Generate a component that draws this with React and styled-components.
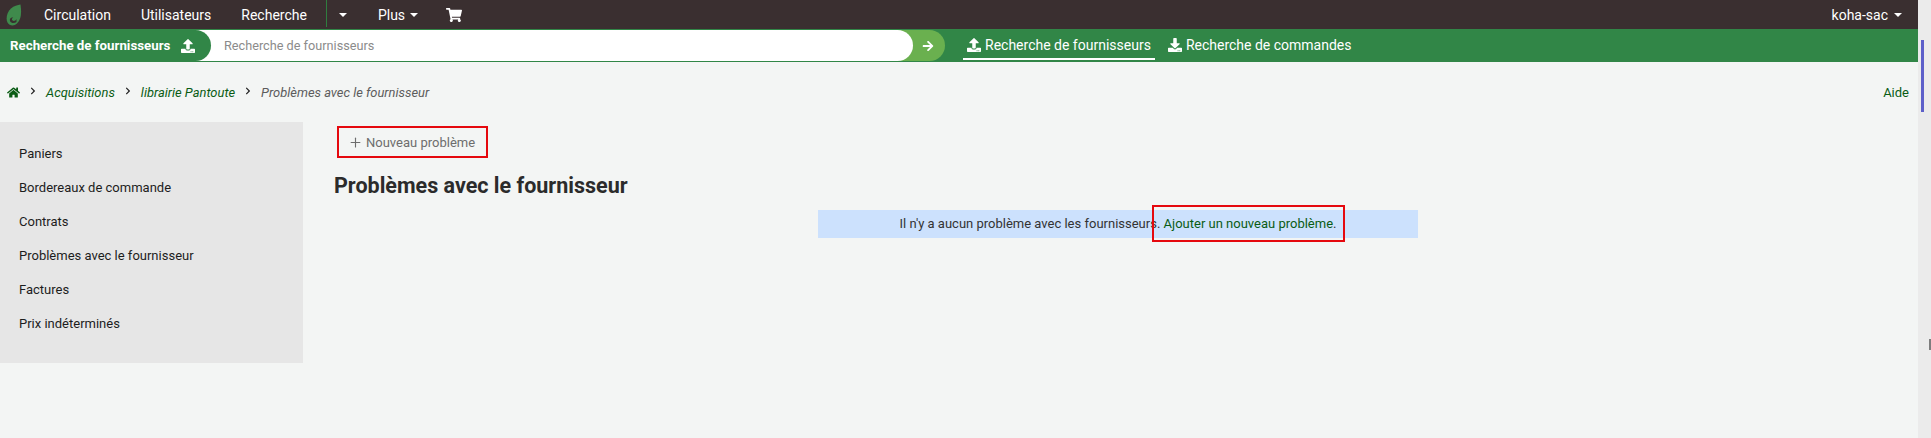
import styled, { createGlobalStyle } from "styled-components";
import { FaShoppingCart, FaHome, FaArrowRight, FaUpload, FaDownload, FaChevronRight } from "react-icons/fa";
import { Plus } from "lucide-react";

const GlobalStyle = createGlobalStyle`
  html, body {
    margin: 0;
    padding: 0;
    overflow: hidden;
  }
  body {
    font-family: Roboto, "Liberation Sans", sans-serif;
    font-size: 13px;
    color: #2b2b2b;
    background: #f3f5f4;
  }
  a {
    text-decoration: none;
  }
`;

const App = () => {
  return (
    <>
      <GlobalStyle />
      <Window>
        <Page>
          <Nav>
            <Logo viewBox="0 0 16 22">
              <path d="M14.5 0.5C15.6 8 15.6 15 11 19.5C8 22.3 3.5 22 1.5 18.5C-0.5 14.5 1 8 5 4.5C8 2 11.5 0.8 14.5 0.5Z" fill="#3f8a4c" />
              <path d="M10.5 18C8.5 19.6 5 19.4 4 17C3.2 14.6 5.4 12.8 7.2 13.8C5.8 14.2 5.4 15.8 6.6 16.6C8 17.4 9.8 16.6 10.5 15Z" fill="#39302f" />
            </Logo>
            <NavItem>Circulation</NavItem>
            <NavItem>Utilisateurs</NavItem>
            <NavItem>Recherche</NavItem>
            <NavDivider />
            <NavCaretOnly><Caret /></NavCaretOnly>
            <NavItem>Plus <Caret /></NavItem>
            <CartLink><FaShoppingCart size={16} /></CartLink>
            <UserMenu>koha-sac <Caret /></UserMenu>
          </Nav>
          <SearchBand>
            <SearchLabel>
              Recherche de fournisseurs
              <FaUpload size={14} />
            </SearchLabel>
            <SearchField>
              <SearchInput placeholder="Recherche de fournisseurs" readOnly />
            </SearchField>
            <SearchGo><FaArrowRight size={12} /></SearchGo>
            <BandLink $active><FaUpload size={14} />Recherche de fournisseurs</BandLink>
            <BandLink><FaDownload size={14} />Recherche de commandes</BandLink>
          </SearchBand>
          <Crumbs>
            <CrumbLink><FaHome size={13} color="#0a5c14" /></CrumbLink>
            <Sep><FaChevronRight size={8} /></Sep>
            <CrumbLink>Acquisitions</CrumbLink>
            <Sep><FaChevronRight size={8} /></Sep>
            <CrumbLink>librairie Pantoute</CrumbLink>
            <Sep><FaChevronRight size={8} /></Sep>
            <CrumbCurrent>Problèmes avec le fournisseur</CrumbCurrent>
            <HelpLink>Aide</HelpLink>
          </Crumbs>
          <Body>
            <Sidebar>
              {["Paniers", "Bordereaux de commande", "Contrats", "Problèmes avec le fournisseur", "Factures", "Prix indéterminés"].map((item) => (
                <SideItem key={item}>{item}</SideItem>
              ))}
            </Sidebar>
            <Main>
              <NewButton><Plus size={15} strokeWidth={1.8} />Nouveau problème</NewButton>
              <Title>Problèmes avec le fournisseur</Title>
              <Alert>
                Il n'y a aucun problème avec les fournisseurs.{" "}
                <AlertLink>
                  Ajouter un nouveau problème
                  <RedMark />
                </AlertLink>
                .
              </Alert>
            </Main>
          </Body>
        </Page>
        <Gutter>
          <Thumb />
          <EdgeTick />
        </Gutter>
      </Window>
    </>
  );
};

export default App;

const Window = styled.div`
  display: flex;
  width: 1931px;
  height: 438px;
  overflow: hidden;
`;

const Page = styled.div`
  flex: 1;
  min-width: 0;
`;

const Gutter = styled.div`
  width: 13px;
  background: #ebebeb;
  display: flex;
  flex-direction: column;
  align-items: flex-end;
`;

const Thumb = styled.div`
  width: 3px;
  height: 72px;
  margin: 40px 7px 0 0;
  background: #5d5fc9;
`;

const EdgeTick = styled.div`
  width: 2px;
  height: 11px;
  margin-top: 227px;
  background: #7d7d7d;
`;

const Nav = styled.div`
  display: flex;
  align-items: center;
  height: 29px;
  background: #3a2f30;
  color: #fff;
  font-size: 14px;
`;

const Logo = styled.svg`
  width: 16px;
  height: 22px;
  margin: 0 22px 0 6px;
`;

const NavItem = styled.a`
  display: flex;
  align-items: center;
  gap: 5px;
  color: #fff;
  margin-right: 30px;
`;

const NavDivider = styled.div`
  width: 1px;
  height: 27px;
  margin: 0 0 2px -11px;
  background: #2f7d3f;
`;

const NavCaretOnly = styled.a`
  display: flex;
  margin: 0 31px 0 12px;
`;

const Caret = styled.span`
  display: inline-block;
  width: 0;
  height: 0;
  border-top: 4px solid #fff;
  border-left: 4px solid transparent;
  border-right: 4px solid transparent;
`;

const CartLink = styled.a`
  display: flex;
  margin-left: -2px;
  color: #fff;
`;

const UserMenu = styled.a`
  display: flex;
  align-items: center;
  gap: 6px;
  margin-left: auto;
  margin-right: 16px;
  color: #fff;
`;

const SearchBand = styled.div`
  display: flex;
  align-items: center;
  height: 33px;
  background: #318647;
`;

const SearchLabel = styled.div`
  display: flex;
  align-items: center;
  gap: 11px;
  height: 31px;
  width: 211px;
  flex-shrink: 0;
  padding-left: 10px;
  box-sizing: border-box;
  border-radius: 0 16px 16px 0;
  background: #318647;
  color: #fff;
  font-weight: 700;
  font-size: 13.3px;
  white-space: nowrap;
  position: relative;
  z-index: 2;
`;

const SearchField = styled.div`
  width: 718px;
  height: 31px;
  margin-left: -16px;
  flex-shrink: 0;
  background: #fff;
  border-radius: 0 16px 16px 0;
  position: relative;
  z-index: 1;
`;

const SearchInput = styled.input`
  width: 100%;
  height: 100%;
  box-sizing: border-box;
  padding: 0 0 0 29px;
  border: 0;
  outline: 0;
  background: none;
  font: inherit;
  font-size: 12.7px;
  &::placeholder {
    color: #8b8b8b;
  }
`;

const SearchGo = styled.div`
  display: flex;
  align-items: center;
  justify-content: center;
  width: 48px;
  height: 31px;
  margin-left: -16px;
  padding-left: 14px;
  box-sizing: border-box;
  background: #6ab04f;
  border-radius: 0 16px 16px 0;
  color: #fff;
`;

const BandLink = styled.a`
  display: flex;
  align-items: center;
  gap: 4px;
  height: 28px;
  margin-left: ${(p) => (p.$active ? "18px" : "9px")};
  padding: 0 4px 0 4px;
  box-sizing: border-box;
  color: #fff;
  font-size: 14px;
  border-bottom: 2px solid ${(p) => (p.$active ? "#fff" : "transparent")};
`;

const Crumbs = styled.div`
  display: flex;
  align-items: center;
  height: 60px;
  padding: 0 9px 0 7px;
  font-size: 12.9px;
`;

const CrumbLink = styled.a`
  display: flex;
  color: #0a5c14;
  font-style: italic;
`;

const CrumbCurrent = styled.span`
  color: #5c5c5c;
  font-style: italic;
`;

const Sep = styled.span`
  display: flex;
  margin: 0 9px 3px 9px;
  color: #222;
`;

const HelpLink = styled.a`
  margin-left: auto;
  color: #0a5c14;
  font-size: 13px;
  font-style: normal;
`;

const Body = styled.div`
  display: flex;
`;

const Sidebar = styled.div`
  width: 303px;
  height: 241px;
  padding: 15px 0 0 19px;
  box-sizing: border-box;
  background: #e6e6e6;
`;

const SideItem = styled.div`
  height: 34px;
  line-height: 34px;
  font-size: 13px;
  color: #1d1d1d;
`;

const Main = styled.div`
  flex: 1;
  min-width: 0;
  padding: 4px 0 0 31px;
  position: relative;
`;

const NewButton = styled.a`
  display: inline-flex;
  align-items: center;
  gap: 3px;
  height: 32px;
  margin-left: 3px;
  padding: 0 11px 0 9px;
  box-sizing: border-box;
  border: 2px solid #e5080e;
  color: #6d6d6d;
  font-size: 13px;
`;

const Title = styled.h1`
  margin: 15px 0 0;
  font-size: 21.5px;
  line-height: 26px;
  font-weight: 700;
  color: #2b2b2b;
`;

const Alert = styled.div`
  width: 600px;
  height: 28px;
  margin: 11px 0 0 484px;
  line-height: 28px;
  text-align: center;
  background: #cce1fd;
  color: #333;
  font-size: 13px;
`;

const AlertLink = styled.a`
  position: relative;
  color: #0a5c14;
`;

const RedMark = styled.span`
  position: absolute;
  top: -11px;
  bottom: -11px;
  left: -12px;
  right: -12px;
  border: 2px solid #e5080e;
`;
